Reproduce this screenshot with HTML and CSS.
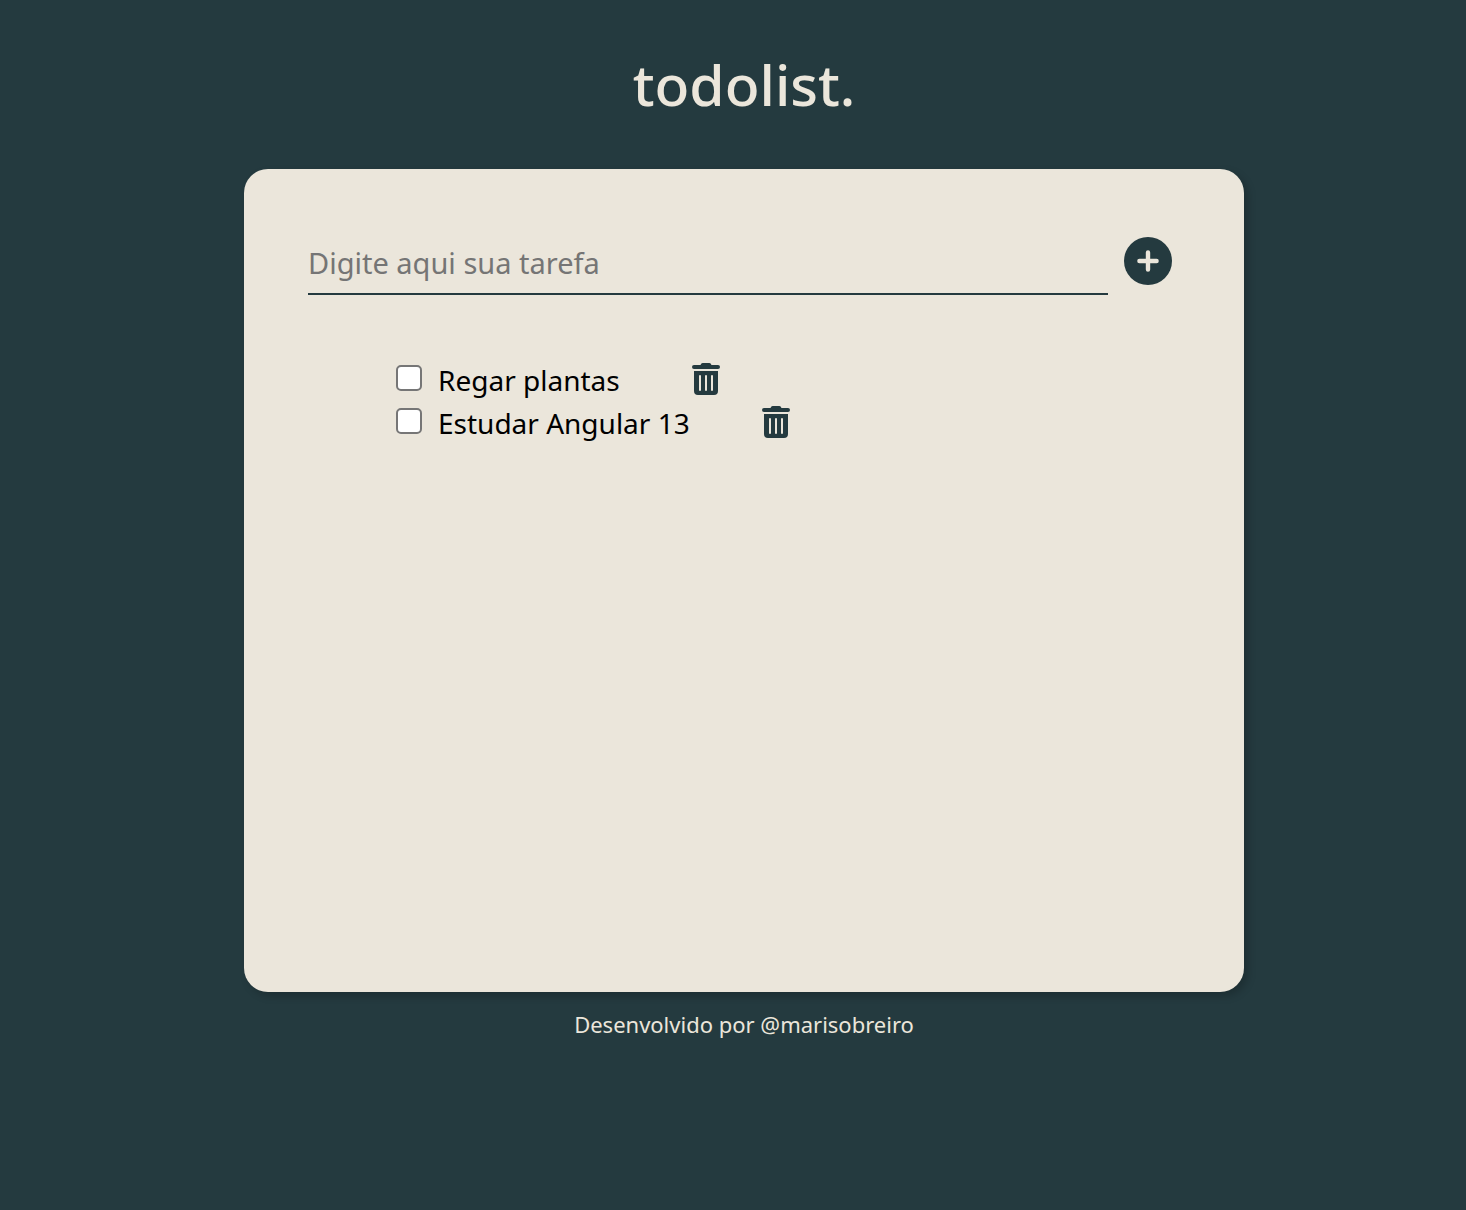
FILE: index.html
```html
<!DOCTYPE html>
<html lang="pt-BR">
<head>
  <meta charset="utf-8">
  <meta name="viewport" content="width=device-width, initial-scale=1">
  <title>todolist.</title>
  <link rel="stylesheet" href="styles.css">
</head>
<body>
  <h1 class="title">todolist.</h1>
  <main class="card">
    <form class="new-task">
      <input class="new-task-input" type="text" placeholder="Digite aqui sua tarefa" aria-label="Digite aqui sua tarefa">
      <button class="add-button" type="button" aria-label="Adicionar">
        <svg width="48" height="48" viewBox="0 0 48 48" fill="none" stroke="#ebe6db" stroke-width="4.4" stroke-linecap="round"><path d="M24 15.4v17.2M15.4 24h17.2"/></svg>
      </button>
    </form>
    <ul class="tasks">
      <li class="task">
        <input class="task-check" type="checkbox" id="task-1">
        <label class="task-label" for="task-1">Regar plantas</label>
        <button class="delete-button" type="button" aria-label="Excluir Regar plantas">
          <svg width="28" height="32" viewBox="0 0 28 32" fill="#243a3f"><path d="M8.5 2 9.2.8Q9.7 0 10.700 0h6.600q1 0 1.500.8l.7 1.200H26a2 2 0 0 1 0 4H2a2 2 0 0 1 0-4z"/><path fill-rule="evenodd" d="M2 8h24v20q0 4-4 4H6q-4 0-4-4zM7 13v14a1 1 0 0 0 2 0V13a1 1 0 0 0-2 0zm6 0v14a1 1 0 0 0 2 0V13a1 1 0 0 0-2 0zm6 0v14a1 1 0 0 0 2 0V13a1 1 0 0 0-2 0z"/></svg>
        </button>
      </li>
      <li class="task">
        <input class="task-check" type="checkbox" id="task-2">
        <label class="task-label" for="task-2">Estudar Angular 13</label>
        <button class="delete-button" type="button" aria-label="Excluir Estudar Angular 13">
          <svg width="28" height="32" viewBox="0 0 28 32" fill="#243a3f"><path d="M8.5 2 9.2.8Q9.7 0 10.700 0h6.600q1 0 1.500.8l.7 1.200H26a2 2 0 0 1 0 4H2a2 2 0 0 1 0-4z"/><path fill-rule="evenodd" d="M2 8h24v20q0 4-4 4H6q-4 0-4-4zM7 13v14a1 1 0 0 0 2 0V13a1 1 0 0 0-2 0zm6 0v14a1 1 0 0 0 2 0V13a1 1 0 0 0-2 0zm6 0v14a1 1 0 0 0 2 0V13a1 1 0 0 0-2 0z"/></svg>
        </button>
      </li>
    </ul>
  </main>
  <footer class="footer">Desenvolvido por @marisobreiro</footer>
</body>
</html>
```

FILE: styles.css
```css
* {
  box-sizing: border-box;
}

body {
  display: flex;
  flex-direction: column;
  align-items: center;
  min-height: 100vh;
  margin: 0;
  padding: 48px 0 48px 22px;
  background: #243a3f;
  color: #ebe6db;
  font-family: "Noto Sans", sans-serif;
}

.title {
  margin: 0 0 49px;
  font-size: 57px;
  font-weight: 500;
  line-height: 72px;
}

.card {
  width: 100%;
  max-width: 1000px;
  min-height: 68vh;
  padding: 64px 72px 64px 64px;
  border-radius: 24px;
  background: #ebe6db;
  box-shadow: 4px 4px 8px rgba(0, 0, 0, 0.2);
  color: #000;
}

.new-task {
  display: flex;
  align-items: center;
  gap: 16px;
}

.new-task-input {
  flex: 1;
  min-width: 0;
  height: 62px;
  padding: 0 0 2px;
  border: 0;
  border-bottom: 2px solid #243a3f;
  background: transparent;
  color: #000;
  font: 29px "Noto Sans", sans-serif;
}

.new-task-input::placeholder {
  color: #757575;
}

.add-button {
  width: 48px;
  height: 48px;
  margin-bottom: 6px;
  padding: 0;
  border: 0;
  border-radius: 50%;
  background: #243a3f;
}

.add-button svg,
.delete-button svg {
  display: block;
}

.tasks {
  margin: 62px 0 0;
  padding: 0 0 0 88px;
  list-style: none;
}

.task {
  display: flex;
  align-items: center;
  height: 43px;
}

.task-check {
  appearance: none;
  width: 26px;
  height: 26px;
  margin: 0 16px 2px 0;
  border: 2px solid #767676;
  border-radius: 5px;
  background: #fff;
}

.task-check:checked {
  background: #243a3f;
}

.task-label {
  margin-right: 72px;
  padding-top: 2px;
  font-size: 28px;
  line-height: 40px;
}

.delete-button {
  padding: 0;
  border: 0;
  background: transparent;
}

.footer {
  margin-top: 16px;
  font-size: 22px;
  line-height: 32px;
}
```
